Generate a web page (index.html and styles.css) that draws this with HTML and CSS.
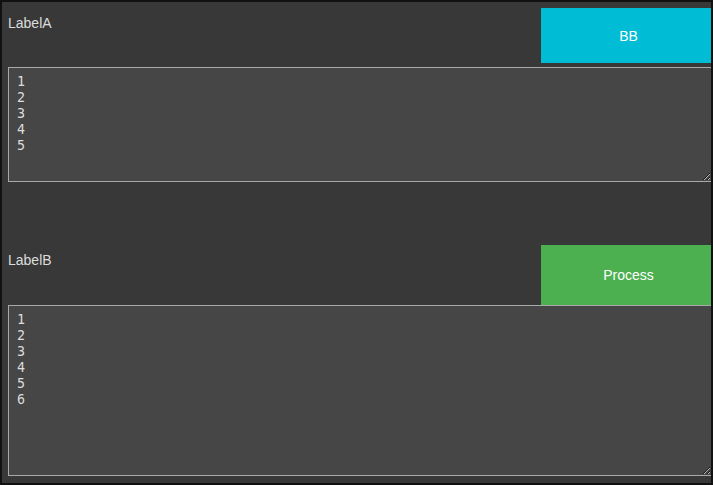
FILE: index.html
```html
<!DOCTYPE html>
<html>
<head>
<meta charset="utf-8">
<link rel="stylesheet" href="styles.css">
</head>
<body>
<div class="frame">
  <div class="panel">
    <div class="row row-a">
      <span class="label">LabelA</span>
      <button class="btn btn-bb">BB</button>
    </div>
    <textarea class="area area-a">1
2
3
4
5</textarea>
  </div>
  <div class="panel panel-b">
    <div class="row row-b">
      <span class="label">LabelB</span>
      <button class="btn btn-process">Process</button>
    </div>
    <textarea class="area area-b">1
2
3
4
5
6</textarea>
  </div>
</div>
</body>
</html>
```
FILE: styles.css
```css
html, body {
  margin: 0;
  padding: 0;
  background: #111;
}
.frame {
  width: 713px;
  height: 485px;
  box-sizing: border-box;
  border: 2px solid #111;
  background: #383838;
  padding: 6px 0 0 6px;
  overflow: hidden;
  font-family: "Liberation Sans", Arial, sans-serif;
}
.panel {
  width: 704px;
  display: flex;
  flex-direction: column;
}
.panel-b {
  margin-top: 63px;
}
.row {
  width: 708px;
  display: flex;
  justify-content: space-between;
  align-items: flex-start;
}
.label {
  color: #dcdcdc;
  font-size: 14px;
  line-height: 16px;
  padding-top: 7px;
}
.btn {
  width: 175px;
  border: none;
  color: #fff;
  font-family: "Liberation Sans", Arial, sans-serif;
  font-size: 14px;
  padding: 0;
  margin: 0;
}
.btn-bb {
  height: 55px;
  background: #00bcd4;
}
.btn-process {
  height: 60px;
  background: #4caf50;
}
.area {
  display: block;
  box-sizing: border-box;
  width: 704px;
  margin: 0;
  background: #464646;
  color: #dcdcdc;
  border: 1px solid #a9a9a9;
  font-family: "DejaVu Sans Mono", monospace;
  font-size: 13.333px;
  line-height: 16px;
  padding: 6px 8px 5px;
  outline: none;
}
.area-a {
  margin-top: 4px;
  height: 115px;
}
.area-b {
  height: 171px;
}
```
